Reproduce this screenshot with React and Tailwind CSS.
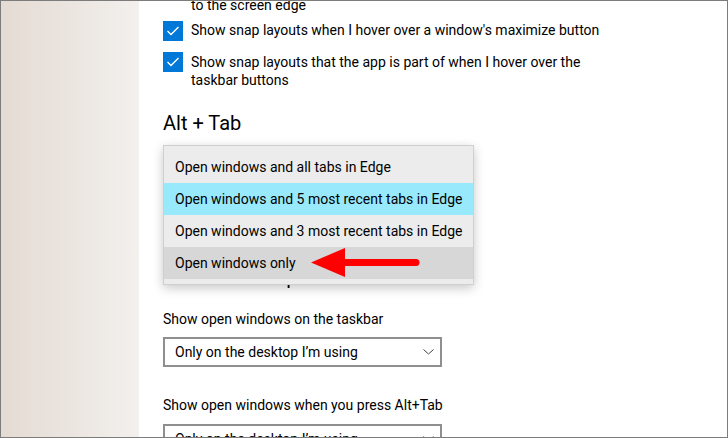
const options = [
  { label: "Open windows and all tabs in Edge", tone: "" },
  { label: "Open windows and 5 most recent tabs in Edge", tone: "bg-[#99e9fd]" },
  { label: "Open windows and 3 most recent tabs in Edge", tone: "" },
  { label: "Open windows only", tone: "bg-[#d7d7d7]" },
];

function Checkbox() {
  return (
    <span className="flex h-5 w-5 shrink-0 items-center justify-center bg-[#0078d7]">
      <svg width="20" height="20" viewBox="0 0 20 20" fill="none">
        <polyline points="4.5,10 8,13.5 15.5,6" stroke="#fff" strokeWidth="1.4" />
      </svg>
    </span>
  );
}

function Select({ value }) {
  return (
    <div className="flex h-[30px] w-[279px] items-center justify-between border-2 border-[#8f8f8f] pl-[10px] pr-[6px]">
      <span className="whitespace-nowrap text-[14px] leading-[18px]">{value}</span>
      <svg width="11" height="6" viewBox="0 0 11 6" fill="none">
        <path d="M0.5 0.5 L5.5 5 L10.5 0.5" stroke="#444" strokeWidth="1" />
      </svg>
    </div>
  );
}

export default function App() {
  return (
    <div className="flex h-[438px] w-[728px] overflow-hidden border border-[#7c7c7c] font-['Roboto',sans-serif] text-black">
      <div className="w-[138px] shrink-0 bg-gradient-to-r from-[#e4dbd3] via-[#ebe5e0] to-[#f3f0ed]" />
      <main className="relative flex-1 overflow-hidden bg-white pl-[24px]">
        <div className="-mt-[5px] pl-[28px] text-[14px] leading-[18px]">to the screen edge</div>

        <div className="mt-[6px] flex items-start gap-2 text-[14px] leading-[18px]">
          <div className="mt-[1px]">
            <Checkbox />
          </div>
          <p className="pt-[1px]">Show snap layouts when I hover over a window's maximize button</p>
        </div>

        <div className="mt-[11px] flex items-start gap-2 text-[14px] leading-[18px]">
          <Checkbox />
          <p className="w-[420px] pt-[1px]">
            Show snap layouts that the app is part of when I hover over the taskbar buttons
          </p>
        </div>

        <h2 className="mt-[20px] text-[20px] leading-[28px]">Alt + Tab</h2>
        <div className="mt-[9px] h-[32px]">
          <Select value="Open windows and 5 most recent tabs in Edge" />
        </div>

        <h2 className="mt-[85px] text-[20px] leading-[28px]">Virtual desktops</h2>

        <p className="mt-[19px] text-[14px] leading-[18px]">Show open windows on the taskbar</p>
        <div className="mt-[9px]">
          <Select value="Only on the desktop I’m using" />
        </div>

        <p className="mt-[29px] text-[14px] leading-[18px]">Show open windows when you press Alt+Tab</p>
        <div className="mt-[10px]">
          <Select value="Only on the desktop I’m using" />
        </div>

        <ul className="absolute left-[24px] top-[144px] w-[311px] border border-[#cfcfcf] bg-[#ececec] pb-[5px] pt-[5px] shadow-[0_3px_10px_rgba(0,0,0,0.22)]">
          {options.map((o) => (
            <li
              key={o.label}
              className={`flex h-[32px] items-center whitespace-nowrap px-[11px] text-[14px] leading-[18px] ${o.tone}`}
            >
              {o.label}
            </li>
          ))}
        </ul>

        <svg className="absolute left-[170px] top-[245px]" width="112" height="34" viewBox="0 0 112 34" fill="none">
          <polygon points="2,16.5 36,2 36,31" fill="#ff0000" />
          <line x1="34" y1="16.5" x2="107" y2="16.5" stroke="#ff0000" strokeWidth="7" strokeLinecap="round" />
        </svg>
      </main>
    </div>
  );
}
